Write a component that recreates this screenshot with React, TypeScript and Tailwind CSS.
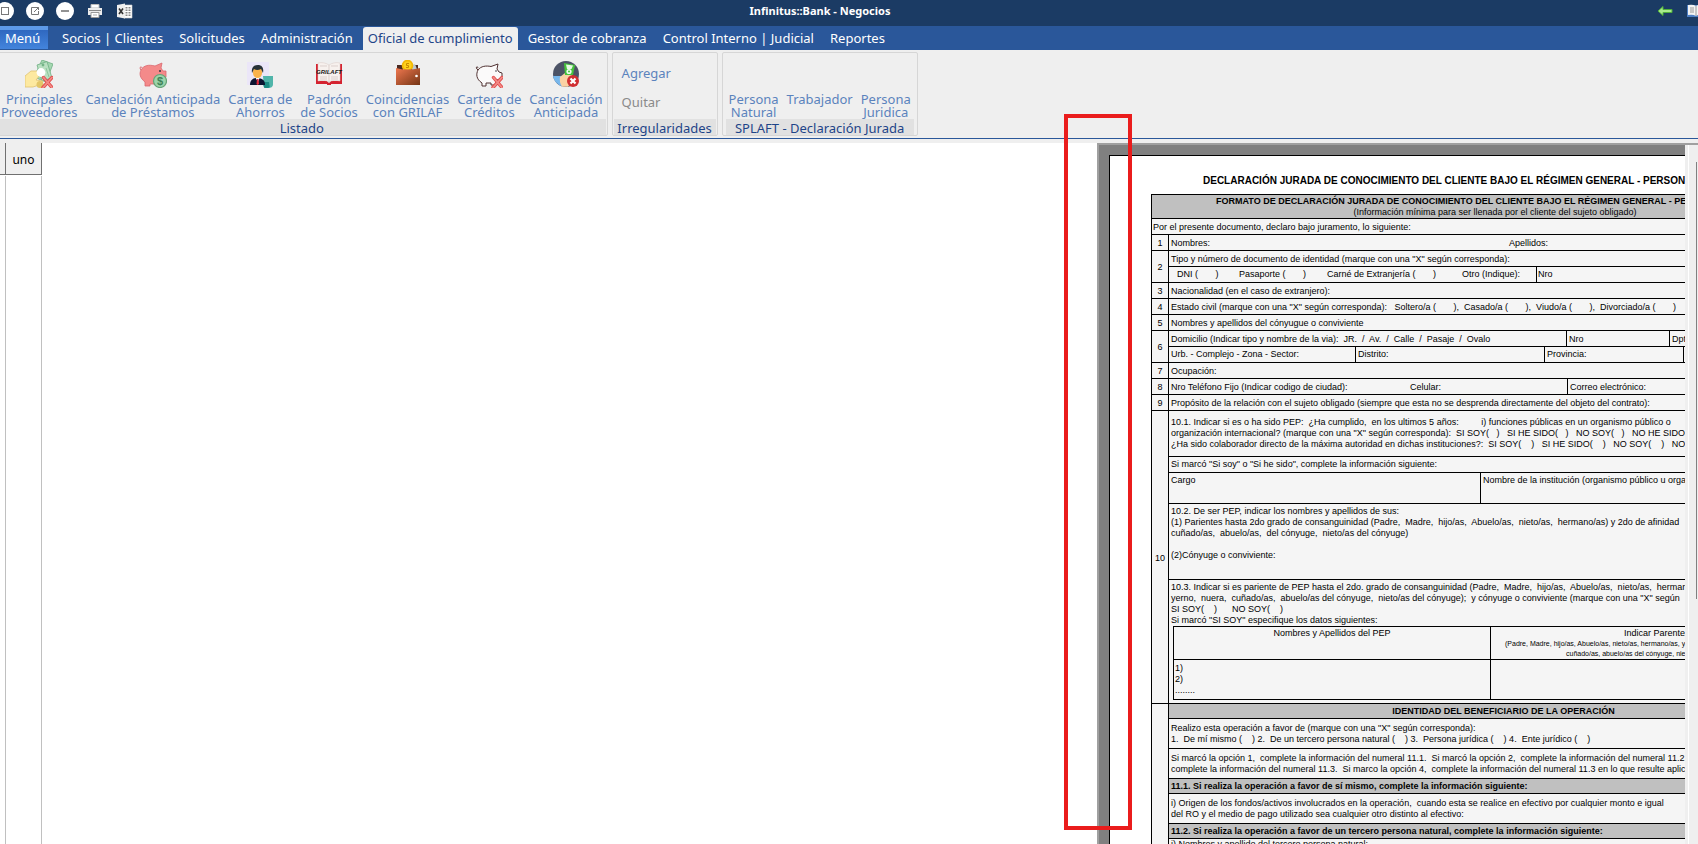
import React from 'react';

const Cross = () => (
  <g>
    <path d="M18.500 17.500L27 27.500M27 17.500L18 27.500" stroke="#e04a4a" strokeWidth="3.400" strokeLinecap="round" />
    <path d="M18.500 17.500L27 27.500M27 17.500L18 27.500" stroke="#f28a86" strokeWidth="1.800" strokeLinecap="round" />
  </g>
);

const icons: Record<string, React.ReactNode> = {
  suppliers: (
    <g>
      <path d="M17 0L28 4L21 22L9 17Z" fill="#a5d8b1" stroke="#6fae83" strokeWidth=".8" />
      <path d="M12 5L22 1.500L27 18L17 21Z" fill="#b9e0c1" stroke="#6fae83" strokeWidth=".8" />
      <circle cx="18" cy="5" r="1.400" fill="#74b487" />
      <path d="M21 8L24 17" stroke="#8cc79b" strokeWidth="1" />
      <path d="M0 16L6 11H12L15 15L11 20L18 21L17 24L8 27H0Z" fill="#fde9a0" stroke="#dfc272" strokeWidth=".8" />
      <circle cx="15" cy="24.500" r="3.500" fill="#e3c668" />
      <circle cx="16" cy="12.500" r="4.400" fill="#fff" />
      <Cross />
    </g>
  ),
  piggy: (
    <g>
      <path d="M2 10C5 5 10 4.500 16 6L23 3L22 8L24 11H27V17L22 21V26H17V24H11V26H6V22C1 18 0 14 2 10Z" fill="#f48a8a" stroke="#d96870" strokeWidth=".8" />
      <path d="M2 10C0 8 2 5 3 8" stroke="#d96870" fill="none" />
      <circle cx="21" cy="11" r="1" fill="#34343c" />
      <circle cx="21" cy="21" r="6.500" fill="#9bd5ab" stroke="#65a377" strokeWidth="1.200" />
      <text x="21" y="25" textAnchor="middle" fontSize="11" fontWeight="700" fill="#3f8358" fontFamily="Liberation Sans">$</text>
    </g>
  ),
  savings: (
    <g>
      <rect x="1" y="2" width="22" height="23" fill="#ebe6f8" />
      <path d="M17 16H27V24C27 27 25 28 22 28H18Z" fill="#50b5aa" />
      <path d="M17 22H23C23 25 25 28 22 28H19Q17 27 17 22Z" fill="#1b8c82" />
      <path d="M4 25C4 20 7 18 11 18C16 18 19 20 19 25Z" fill="#0c1530" />
      <path d="M9 17H14L12 22Z" fill="#fff" />
      <path d="M11 19H12.500L13 24L11.500 25L10.500 24Z" fill="#e62a3a" />
      <ellipse cx="11.500" cy="12.500" rx="4.600" ry="5.500" fill="#fbb34a" />
      <path d="M6 13C5 7 8 5 12 5S18 8 17 13L15 9Q11 11 8 9Z" fill="#283238" />
    </g>
  ),
  register: (
    <g>
      <path d="M1 4H3V21H12L14 23L16 21H25V4H27V24H16V25H12V24H1Z" fill="#d42330" />
      <path d="M3 3C7 2 11 3 14 5C17 3 21 2 25 3V21C21 20 17 20 14 22C11 20 7 20 3 21Z" fill="#f7f1ee" stroke="#d8c8c4" strokeWidth=".5" />
      <path d="M14 5V22M5 6H12M16 6H23M5 17H12M16 17H23M5 19H12M16 19H23" stroke="#d0c2be" strokeWidth=".7" />
      <text x="14" y="14" textAnchor="middle" fontSize="6" fontWeight="700" fontStyle="italic" fill="#181818" fontFamily="Liberation Sans">GRILAFT</text>
    </g>
  ),
  wallet: (
    <g>
      <path d="M3 5H9V10H3Z" fill="#4b2a22" />
      <path d="M12 5H24V12H12Z" fill="#4b2a22" />
      <path d="M18 5L21 4L24 12H18Z" fill="#bcc8d0" />
      <circle cx="13.500" cy="5.500" r="5.800" fill="#f2b705" />
      <circle cx="13.500" cy="5.500" r="4" fill="#fdd11c" />
      <path d="M15 3.500H12.500V5.500H14.500V7.500H12" stroke="#c98a00" strokeWidth="1" />
      <defs>
        <linearGradient id="leather" x1="0" y1="0" x2="1" y2="1">
          <stop stopColor="#f07850" />
          <stop offset="1" stopColor="#743414" />
        </linearGradient>
      </defs>
      <path d="M2 8Q13 11 26 8V25H2Z" fill="url(#leather)" />
      <circle cx="22.500" cy="16" r="1.300" fill="#fff" />
    </g>
  ),
  credit: (
    <g>
      <path d="M3 10C6 6 11 5.500 16 6.500L23 4L22 9L24 12L27 13V18L22 20L20 25H16V23H11V26H7V23C1 19 1 14 3 10Z" fill="#fbfafa" stroke="#4f3030" strokeWidth="1" />
      <path d="M3 10C0 8 2 5 3 8" stroke="#4f3030" fill="none" />
      <circle cx="21" cy="11" r=".8" fill="#34343c" />
      <Cross />
    </g>
  ),
  cancel: (
    <g>
      <circle cx="14" cy="14" r="13" fill="#4c5366" />
      <path d="M1 16H10V26.500Q2 23 1 16Z" fill="#77b7ec" />
      <path d="M8 17L13 13L20 15V22L16 26.800H10Q7 22 8 17Z" fill="#fbd1a4" />
      <path d="M12 3L23 5L21 15H13Z" fill="#46c33c" />
      <path d="M14 4.500L21 5.500L19.500 9H15Z" fill="#e7fbe5" />
      <circle cx="17" cy="11.500" r="2.600" fill="#f0fff0" />
      <circle cx="17" cy="11.500" r="1" fill="#46c33c" />
      <circle cx="21" cy="21" r="6" fill="#d02f32" />
      <path d="M18.500 18.500L23.500 23.500M23.500 18.500L18.500 23.500" stroke="#fff" strokeWidth="2.200" />
    </g>
  ),
};

const tools = [
  { icon: 'suppliers', lines: ['Principales', 'Proveedores'] },
  { icon: 'piggy', lines: ['Canelación Anticipada', 'de Préstamos'] },
  { icon: 'savings', lines: ['Cartera de', 'Ahorros'] },
  { icon: 'register', lines: ['Padrón', 'de Socios'] },
  { icon: 'wallet', lines: ['Coincidencias', 'con GRILAF'] },
  { icon: 'credit', lines: ['Cartera de', 'Créditos'] },
  { icon: 'cancel', lines: ['Cancelación', 'Anticipada'] },
];

const declarations = [
  { icon: '', lines: ['Persona', 'Natural'] },
  { icon: '', lines: ['Trabajador'] },
  { icon: '', lines: ['Persona', 'Juridica'] },
];

function Tool({ icon, lines }: { icon: string; lines: string[] }) {
  return (
    <button className="flex flex-col items-center px-1 pt-[7px] text-[13px] leading-[13px] whitespace-nowrap text-[#5b83bd]">
      <span className="mb-[5px] h-7 w-7">
        {icon && <svg viewBox="0 0 28 28" fill="none" className="h-7 w-7">{icons[icon]}</svg>}
      </span>
      <span className="text-center whitespace-pre">{lines.join('\n')}</span>
    </button>
  );
}

function Group({ caption, className = '', children }: { caption: string; className?: string; children: React.ReactNode }) {
  return (
    <section className={`flex flex-col justify-between rounded-[2px] border border-[#d6d6d6] bg-[#efefef] ${className}`}>
      <div className="flex">{children}</div>
      <h2 className="mx-px h-4 bg-[#e1e1e1] text-center text-[13px] leading-[18px] whitespace-nowrap text-[#1e4488]">{caption}</h2>
    </section>
  );
}

const round = 'flex h-[18px] w-[18px] items-center justify-center rounded-full bg-white';

function TitleBar() {
  return (
    <header className="relative flex h-[26px] items-center bg-[#1b3b64] pb-1">
      <div className="-ml-1 flex items-center gap-3">
        <button aria-label="Restaurar" className={round}>
          <svg viewBox="0 0 10 10" className="h-[10px] w-[10px]"><rect x="1.500" y="1.500" width="7" height="7" fill="none" stroke="#777" /></svg>
        </button>
        <button aria-label="Abrir" className={round}>
          <svg viewBox="0 0 10 10" className="h-[10px] w-[10px]"><path d="M6 1.500H1.500V8.500H8.500V5M4 6L8.500 1.500M6 1.500H8.500V4" fill="none" stroke="#777" /></svg>
        </button>
        <button aria-label="Minimizar" className={round}>
          <svg viewBox="0 0 10 10" className="h-[10px] w-[10px]"><path d="M1 5H9" stroke="#777" strokeWidth="1.600" /></svg>
        </button>
        <button aria-label="Imprimir" className="h-[18px] w-[18px]">
          <svg viewBox="0 0 18 18"><path d="M5 2.500H13V6H5Z" fill="#fff" stroke="#bbb" /><path d="M2 6H16V13H2Z" fill="#ececec" /><path d="M3 8.500H15" stroke="#888" /><path d="M5 10.500H13V15.500H5Z" fill="#fff" stroke="#999" /><path d="M7 13H11" stroke="#aaa" /></svg>
        </button>
        <button aria-label="Exportar a Excel" className="h-[18px] w-[18px]">
          <svg viewBox="0 0 18 18"><path d="M8 3H16V16H8Z" fill="#fff" stroke="#ccc" strokeWidth=".6" /><path d="M10.500 5V14M13.500 5V14" stroke="#888" strokeWidth="2" strokeDasharray="1.500 1" /><path d="M1 3L9 1.500V16.500L1 15Z" fill="#efefef" /><path d="M3 6.500L7 12M7 6.500L3 12" stroke="#333" strokeWidth="1.600" /></svg>
        </button>
      </div>
      <h1 className="absolute inset-x-0 -ml-[58px] text-center text-[11px] font-bold text-white">Infinitus::Bank - Negocios</h1>
      <div className="ml-auto flex items-center gap-[14px]">
        <button aria-label="Volver">
          <svg viewBox="0 0 16 12" className="h-3 w-4"><path d="M1 6L6 1.500V4.500H15V7.500H6V10.500Z" fill="#a8ea8c" stroke="#4fae3a" /></svg>
        </button>
        <button aria-label="Manual" className="w-[11px] overflow-hidden">
          <svg viewBox="0 0 18 14" className="h-[14px] w-[18px]"><path d="M0 1H18V13H0Z" fill="#4d7fc4" /><path d="M1 1Q6 0 9 2Q12 0 17 1V11Q12 10 9 12Q6 10 1 11Z" fill="#f3f3f3" /><path d="M3 4H7M3 6H7M3 8H7M11 4H15M11 6H15M11 8H15M9 2V12" stroke="#999" /></svg>
        </button>
      </div>
    </header>
  );
}

const tabs = ['Socios | Clientes', 'Solicitudes', 'Administración', 'Oficial de cumplimiento', 'Gestor de cobranza', 'Control Interno | Judicial', 'Reportes'];

function TabBar() {
  return (
    <nav className="flex h-6 items-stretch bg-[#2a579a] text-[13px] text-white">
      <button className="mr-[6px] mb-px flex w-12 items-center border-t-4 border-[#5d9ae8] bg-linear-to-b from-[#2f68c0] to-[#4384dc] pb-1 pl-[5px] leading-4">Menú</button>
      {tabs.map((t) => {
        const active = t.startsWith('Oficial');
        return (
          <button key={t} className={active ? 'mx-[2px] mt-px rounded-t-[3px] bg-[#efefef] px-[5px] text-[#1e4488]' : 'px-2 pt-px'}>
            {t}
          </button>
        );
      })}
    </nav>
  );
}

const num = 'w-[17px] border border-black p-0 pt-[2px] text-center align-middle font-normal';
const line = 'flex items-center whitespace-pre px-[2px]';
const field = 'flex h-[15px] items-stretch whitespace-pre px-[2px] leading-[16px]';
const top = 'border-t border-black';
const band = 'bg-[#c0c0c0] font-bold';

function Row({ n, children }: { n: string; children: React.ReactNode }) {
  return (
    <tr>
      <th scope="row" className={num}>{n}</th>
      <td className="border border-black p-0 align-top">{children}</td>
    </tr>
  );
}

function Declaration() {
  return (
    <table className="w-[688px] table-fixed border-collapse bg-[#f5f5f5] text-[9px] leading-[11px]">
      <colgroup>
        <col className="w-[17px]" />
        <col />
      </colgroup>
      <thead>
        <tr>
          <th colSpan={2} className="h-6 border border-black bg-[#c0c0c0] p-0 font-normal">
            <div className="pl-16 text-left font-bold whitespace-nowrap">FORMATO DE DECLARACIÓN JURADA DE CONOCIMIENTO DEL CLIENTE BAJO EL RÉGIMEN GENERAL - PERSONA NATURAL</div>
            <div>(Información mínima para ser llenada por el cliente del sujeto obligado)</div>
          </th>
        </tr>
      </thead>
      <tbody>
        <tr><td colSpan={2} className="h-4 border border-black px-px pt-[2px] pb-0">Por el presente documento, declaro bajo juramento, lo siguiente:</td></tr>
        <Row n="1">
          <div className={field}><span className="w-[338px]">Nombres:</span><span>Apellidos:</span></div>
        </Row>
        <Row n="2">
          <div className={field}>Tipo y número de documento de identidad (marque con una "X" según corresponda):</div>
          <div className={`${line} ${top} h-4`}>
            <span className="w-[68px] pl-[6px]">DNI (       )</span>
            <span className="w-[88px]">Pasaporte (       )</span>
            <span className="w-[135px]">Carné de Extranjería (       )</span>
            <span className="w-[74px]">Otro (Indique):</span>
            <span className="flex h-full items-center border-l border-black pl-px">Nro</span>
          </div>
        </Row>
        <Row n="3"><div className={field}>Nacionalidad (en el caso de extranjero):</div></Row>
        <Row n="4"><div className={field}>Estado civil (marque con una "X" según corresponda):   Soltero/a (       ),  Casado/a (       ),  Viudo/a (       ),  Divorciado/a (       )</div></Row>
        <Row n="5"><div className={field}>Nombres y apellidos del cónyugue o conviviente</div></Row>
        <Row n="6">
          <div className={field}>
            <span className="w-[395px]">Domicilio (Indicar tipo y nombre de la via):  JR.  /  Av.  /  Calle  /  Pasaje  /  Ovalo</span>
            <span className="w-[103px] border-l border-black pl-[2px]">Nro</span>
            <span className="border-l border-black pl-[2px]">Dpto.</span>
          </div>
          <div className={`${line} ${top} h-4`}>
            <span className="w-[184px]">Urb. - Complejo - Zona - Sector:</span>
            <span className="flex h-full w-[189px] items-center border-l border-black pl-[2px]">Distrito:</span>
            <span className="flex h-full w-[140px] items-center border-x border-black pl-[2px]">Provincia:</span>
          </div>
        </Row>
        <Row n="7"><div className={field}>Ocupación:</div></Row>
        <Row n="8">
          <div className={field}>
            <span className="w-[239px]">Nro Teléfono Fijo (Indicar codigo de ciudad):</span>
            <span className="w-[157px]">Celular:</span>
            <span className="border-l border-black pl-[2px]">Correo electrónico:</span>
          </div>
        </Row>
        <Row n="9"><div className={field}>Propósito de la relación con el sujeto obligado (siempre que esta no se desprenda directamente del objeto del contrato):</div></Row>
        <Row n="10">
          <div className={`${line} h-[45px]`}>{'10.1. Indicar si es o ha sido PEP:  ¿Ha cumplido,  en los ultimos 5 años:         i) funciones públicas en un organismo público o\norganización internacional? (marque con una "X" según corresponda):  SI SOY(   )   SI HE SIDO(   )   NO SOY(   )   NO HE SIDO(   )\n¿Ha sido colaborador directo de la máxima autoridad en dichas instituciones?:  SI SOY(    )   SI HE SIDO(    )   NO SOY(    )   NO HE SIDO(    )'}</div>
          <div className={`${line} ${top} h-4`}>Si marcó "Si soy" o "Si he sido", complete la información siguiente:</div>
          <div className={`${top} flex h-[31px] pl-[2px] whitespace-nowrap`}>
            <span className="w-[309px] pt-[2px]">Cargo</span>
            <span className="border-l border-black pt-[2px] pl-[2px]">Nombre de la institución (organismo público u organización internacional)</span>
          </div>
          <div className={`${top} h-[76px] px-[2px] pt-[2px] whitespace-pre`}>{'10.2. De ser PEP, indicar los nombres y apellidos de sus:\n(1) Parientes hasta 2do grado de consanguinidad (Padre,  Madre,  hijo/as,  Abuelo/as,  nieto/as,  hermano/as) y 2do de afinidad\ncuñado/as,  abuelo/as,  del cónyuge,  nieto/as del cónyuge)\n\n(2)Cónyuge o conviviente:'}</div>
          <div className={`${top} h-[124px] px-[2px] pt-[2px] whitespace-pre`}>
            {'10.3. Indicar si es pariente de PEP hasta el 2do. grado de consanguinidad (Padre,  Madre,  hijo/as,  Abuelo/as,  nieto/as,  hermano/as,\nyerno,  nuera,  cuñado/as,  abuelo/as del cónyuge,  nieto/as del cónyuge);  y cónyuge o conviviente (marque con una "X" según\nSI SOY(    )      NO SOY(    )\nSi marcó "SI SOY" especifique los datos siguientes:'}
            <table className="ml-[2px] w-[660px] table-fixed border-collapse">
              <thead>
                <tr className="h-[33px]">
                  <th className="w-[317px] border border-black p-0 align-top leading-[13px] font-normal">Nombres y Apellidos del PEP</th>
                  <th className="border border-black p-0 align-top font-normal">
                    <div className="leading-[12px]">Indicar Parentesco</div>
                    <div className="pl-[14px] text-left text-[7px] leading-[10px]">(Padre, Madre, hijo/as, Abuelo/as, nieto/as, hermano/as, yerno, nuera,</div>
                    <div className="pl-[75px] text-left text-[7px] leading-[10px]">cuñado/as, abuelo/as del cónyuge, nieto/as del cónyuge)</div>
                  </th>
                </tr>
              </thead>
              <tbody>
                <tr className="h-10">
                  <td className="border border-black px-px py-0">{'1)\n2)\n........'}</td>
                  <td className="border border-black p-0" />
                </tr>
              </tbody>
            </table>
          </div>
        </Row>
        <Row n="">
          <div className={`${band} h-[14px] text-center leading-[15px]`}>IDENTIDAD DEL BENEFICIARIO DE LA OPERACIÓN</div>
          <div className={`${line} ${top} h-[30px]`}>{'Realizo esta operación a favor de (marque con una "X" según corresponda):\n1.  De mí mismo (    ) 2.  De un tercero persona natural (    ) 3.  Persona jurídica (    ) 4.  Ente jurídico (    )'}</div>
          <div className={`${line} ${top} h-[30px]`}>{'Si marcó la opción 1,  complete la información del numeral 11.1.  Si marcó la opción 2,  complete la información del numeral 11.2.\ncomplete la información del numeral 11.3.  Si marco la opción 4,  complete la información del numeral 11.3 en lo que resulte aplicable.'}</div>
          <div className={`${line} ${top} ${band} h-[15px]`}>11.1. Si realiza la operación a favor de sí mismo, complete la información siguiente:</div>
          <div className={`${line} ${top} h-[30px]`}>{'i) Origen de los fondos/activos involucrados en la operación,  cuando esta se realice en efectivo por cualquier monto e igual\ndel RO y el medio de pago utilizado sea cualquier otro distinto al efectivo:'}</div>
          <div className={`${line} ${top} ${band} h-[15px]`}>11.2. Si realiza la operación a favor de un tercero persona natural, complete la información siguiente:</div>
          <div className={`${top} h-[30px] px-[2px] whitespace-pre`}>{'i) Nombres y apellido del tercero persona natural:\nii) Nacionalidad:'}</div>
        </Row>
      </tbody>
    </table>
  );
}

export default function App() {
  return (
    <div className="flex h-screen flex-col overflow-hidden bg-white font-['Noto_Sans',sans-serif]">
      <TitleBar />
      <TabBar />
      <div className="flex h-[88px] shrink-0 gap-1 bg-[#efefef] pt-[2px] pb-[2px]">
        <Group caption="Listado" className="-ml-[6px] pl-[2px]">{tools.map((t) => <Tool key={t.lines.join()} {...t} />)}</Group>
        <Group caption="Irregularidades" className="w-[106px]">
          <div className="flex flex-col items-start gap-4 pt-[14px] pl-[9px] text-[13px] leading-[13px]">
            <button className="text-[#5b83bd]">Agregar</button>
            <button className="text-[#8a8a8a]">Quitar</button>
          </div>
        </Group>
        <Group caption="SPLAFT - Declaración Jurada" className="w-[196px] px-[2px]">{declarations.map((t) => <Tool key={t.lines.join()} {...t} />)}</Group>
      </div>
      <div className="h-[5px] shrink-0 border-t border-[#2a579a] bg-[#efefef]" />
      <main className="flex min-h-0 flex-1">
        <div className="flex flex-col">
          <div className="flex h-8 border-b border-[#707070] bg-[#efefef] text-[12px]">
            <span className="w-[6px] border-r border-[#707070]" />
            <span className="flex w-9 items-center justify-center border-r border-[#707070] pt-[2px]">uno</span>
          </div>
          <div className="flex flex-1 pt-px">
            <span className="w-[6px] border-r border-[#c0c0c0]" />
            <span className="w-9 border-r border-[#c0c0c0]" />
          </div>
        </div>
        <div className="flex-1" />
        <div className="relative flex w-[601px] border-t-2 border-[#a0a0a0] font-['Liberation_Sans',sans-serif] text-black">
          <div className="min-w-0 flex-1 overflow-hidden border-l-2 border-[#a0a0a0] bg-[#808080] pt-[10px] pl-[10px]">
            <div className="h-[1000px] w-[780px] border border-black bg-white pl-[41px]">
              <h2 className="flex h-[38px] w-[688px] items-center pt-[10px] pl-[52px] text-[10px] font-bold whitespace-nowrap">DECLARACIÓN JURADA DE CONOCIMIENTO DEL CLIENTE BAJO EL RÉGIMEN GENERAL - PERSONA NATURAL</h2>
              <Declaration />
            </div>
          </div>
          <div className="w-1 border-r border-white bg-[#efefef]" />
          <div className="w-[9px] bg-[#efefef] pt-[17px]">
            <div className="ml-[7px] h-[437px] w-px bg-[#808080]" />
          </div>
          <div className="absolute -top-[31px] bottom-[14px] -left-[33px] w-[68px] border-4 border-[#ea1c1c]" />
        </div>
      </main>
    </div>
  );
}
